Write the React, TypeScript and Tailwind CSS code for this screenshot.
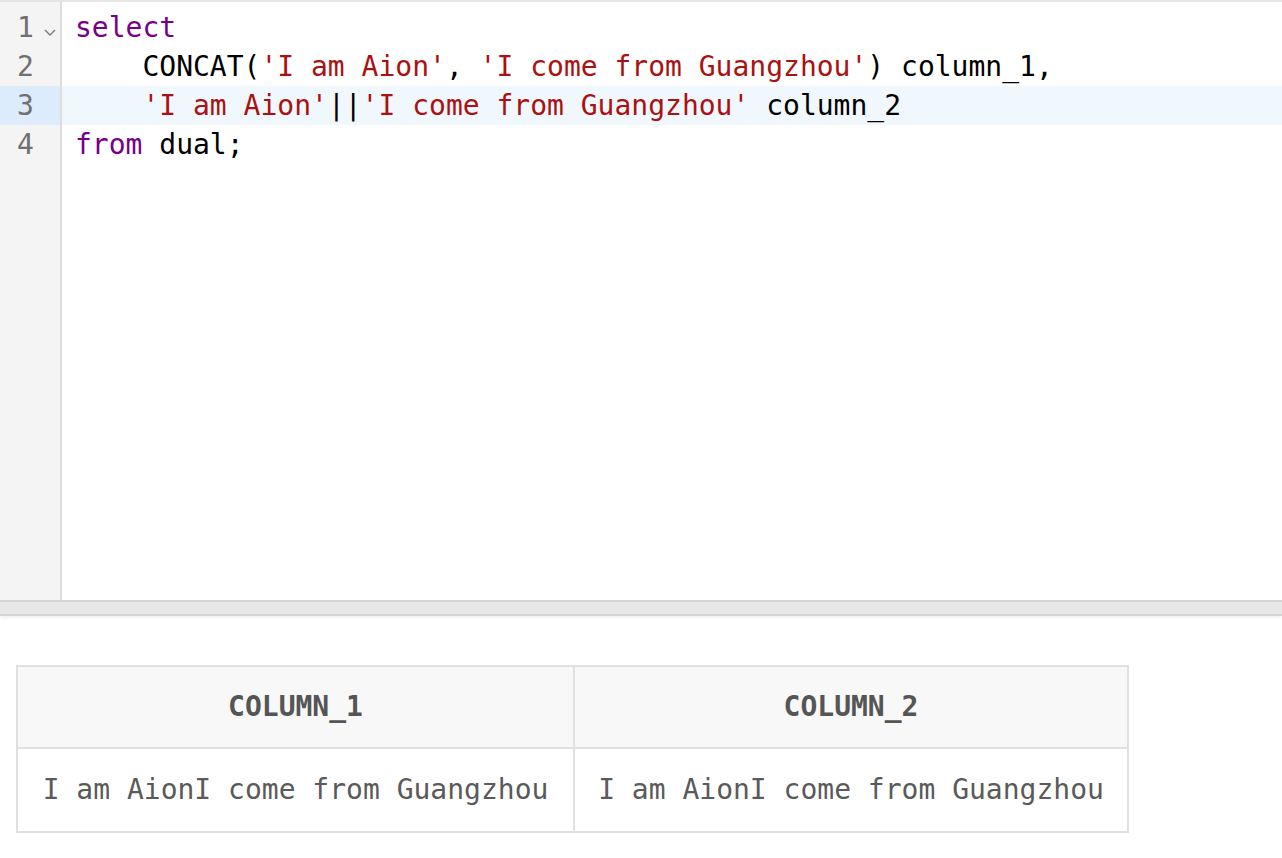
import React from "react";

const mono = { fontFamily: '"DejaVu Sans Mono", "Liberation Mono", monospace' };

function Chevron() {
  return (
    <svg width="14" height="9" viewBox="0 0 14 9" className="block">
      <polyline points="2,2 7,7 12,2" fill="none" stroke="#7a7a7a" strokeWidth="1.4" />
    </svg>
  );
}

const K = ({ children }: { children: React.ReactNode }) => <span className="text-[#770088]">{children}</span>;
const S = ({ children }: { children: React.ReactNode }) => <span className="text-[#aa1111]">{children}</span>;

export default function App() {
  const lines: React.ReactNode[] = [
    <K>select</K>,
    <>
      {"    CONCAT("}
      <S>'I am Aion'</S>
      {", "}
      <S>'I come from Guangzhou'</S>
      {") column_1,"}
    </>,
    <>
      {"    "}
      <S>'I am Aion'</S>
      {"||"}
      <S>'I come from Guangzhou'</S>
      {" column_2"}
    </>,
    <>
      <K>from</K>
      {" dual;"}
    </>,
  ];

  return (
    <div className="w-full h-[858px] bg-white flex flex-col overflow-hidden" style={mono}>
      <div className="h-[600px] border-t-2 border-[#e5e5e5] flex">
        <div className="w-[62px] shrink-0 bg-[#f4f4f4] border-r-2 border-[#dddddd] pt-[6px]">
          {lines.map((_, i) => (
            <div
              key={i}
              className={`h-[39px] flex items-center text-[28px] text-[#707070] ${i === 2 ? "bg-[#dcecfc]" : ""}`}
            >
              <span className="pl-[17px] w-[43px] leading-none">{i + 1}</span>
              {i === 0 && (
                <span className="mt-[10px]">
                  <Chevron />
                </span>
              )}
            </div>
          ))}
        </div>
        <div className="flex-1 pt-[6px]">
          {lines.map((l, i) => (
            <div
              key={i}
              className={`h-[39px] flex items-center pl-[13px] text-[28px] text-black ${i === 2 ? "bg-[#f0f8fe]" : ""}`}
            >
              <span className="whitespace-pre">{l}</span>
            </div>
          ))}
        </div>
      </div>
      <div className="h-[16px] bg-[#e8e8e8] border-y-2 border-[#d4d4d4] shadow-[0_2px_3px_rgba(0,0,0,0.06)]" />
      <div className="pl-[16px] pt-[49px]">
        <div className="w-[1113px] border-l-2 border-t-2 border-[#e0e0e0] grid grid-cols-[557px_554px]">
          {["COLUMN_1", "COLUMN_2"].map((h) => (
            <div
              key={h}
              className="h-[82px] bg-[#f8f8f8] border-r-2 border-b-2 border-[#e0e0e0] flex items-center justify-center text-[28px] font-bold text-[#555555]"
            >
              {h}
            </div>
          ))}
          {[0, 1].map((i) => (
            <div
              key={i}
              className="h-[84px] bg-white border-r-2 border-b-2 border-[#e0e0e0] flex items-center justify-center text-[28px] text-[#5a5a5a] whitespace-pre"
            >
              I am AionI come from Guangzhou
            </div>
          ))}
        </div>
      </div>
    </div>
  );
}
